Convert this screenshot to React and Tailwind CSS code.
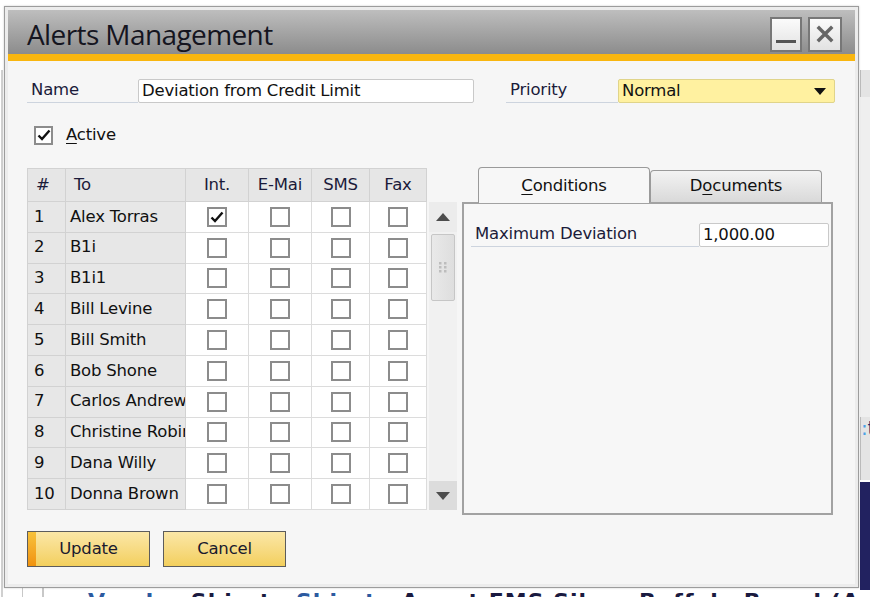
import React from "react";

const rows = [
  { n: 1, name: "Alex Torras", int: true },
  { n: 2, name: "B1i" },
  { n: 3, name: "B1i1" },
  { n: 4, name: "Bill Levine" },
  { n: 5, name: "Bill Smith" },
  { n: 6, name: "Bob Shone" },
  { n: 7, name: "Carlos Andrews" },
  { n: 8, name: "Christine Robinson" },
  { n: 9, name: "Dana Willy" },
  { n: 10, name: "Donna Brown" },
];

const Check = () => (
  <svg width="14" height="12" viewBox="0 0 14 12">
    <path d="M1.5 6.5 L5 10 L12.5 1.5" fill="none" stroke="#111" strokeWidth="2.4" />
  </svg>
);

const Box = ({ checked }) => (
  <div className="w-[20px] h-[20px] border-2 border-[#8c8c8c] bg-white flex items-center justify-center">
    {checked && <Check />}
  </div>
);

const Field = ({ label, labelW, fieldW, value, yellow }) => (
  <div className="flex items-end">
    <div
      className="h-[25px] border-b border-[#cdd4de] pl-[4px] leading-[24px] text-[#1b1b3a] whitespace-nowrap"
      style={{ width: labelW }}
    >
      {label}
    </div>
    <div
      className={`h-[24px] border rounded-[2px] pl-[3px] leading-[22px] flex items-center justify-between pr-[8px] ${
        yellow ? "bg-[#fff1a0] border-[#e0d48a]" : "bg-white border-[#c9c9c9]"
      }`}
      style={{ width: fieldW }}
    >
      <span className="whitespace-nowrap">{value}</span>
      {yellow && (
        <svg width="12" height="7" viewBox="0 0 12 7">
          <path d="M0 0 H12 L6 7 Z" fill="#111" />
        </svg>
      )}
    </div>
  </div>
);

const cols = "grid grid-cols-[39px_120px_63px_63px_58px_57px]";

const App = () => {
  return (
    <div className="relative w-[870px] h-[597px] overflow-hidden bg-white font-['DejaVu_Sans',sans-serif] text-[16.5px] tracking-[-0.2px] text-[#111]">
      {/* desktop behind the dialog */}
      <div className="absolute left-[1px] top-[70px] w-[2px] h-[527px] bg-[#d0d0d0]" />
      <div className="absolute left-[860px] top-[70px] w-[10px] h-[410px] bg-[#e4e4e4] border-l border-[#bdbdbd]" />
      <div className="absolute left-[860px] top-[97px] w-[10px] h-[320px] bg-[#efefef]" />
      <div className="absolute left-[861px] top-[416px] text-[20px] leading-[24px] text-[#1d2a6b] whitespace-nowrap">
        <span className="text-[#4aa0e6]">:</span>t
      </div>
      <div className="absolute left-[860px] top-[482px] w-[10px] h-[108px] bg-[#222260]" />
      <div className="absolute left-[42px] top-[588px] w-[2px] h-[9px] bg-[#c8c8c8]" />
      <div className="absolute left-[22px] top-[588px] w-[1px] h-[9px] bg-[#c8c8c8]" />
      <div className="absolute left-[88px] top-[589px] whitespace-nowrap font-bold text-[22px] leading-[26px] text-[#1a1a40] tracking-[1px]">
        <span className="text-[#2c5aa0]">Vendor</span> Ship-to <span className="text-[#2c5aa0]">Ship-to</span> Agent EMS Silver Buffalo Board (Ame
      </div>

      {/* dialog window */}
      <div className="absolute left-[4px] top-[6px] w-[855px] h-[582px] border border-[#9c9c9c] bg-[#ececec] p-[3px] flex flex-col shadow-[0_0_2px_rgba(0,0,0,0.2)]">
        {/* title bar */}
        <div className="h-[44px] bg-gradient-to-b from-[#bebebe] to-[#8c8c8c] flex items-center justify-between pl-[19px] pr-[13px]">
          <div className="font-['Open_Sans',sans-serif] text-[28px] tracking-[-0.6px] text-[#15151f] pt-[4px]">
            Alerts Management
          </div>
          <div className="flex gap-[6px] pt-[4px]">
            <div className="w-[32px] h-[35px] border-2 border-[#777] bg-gradient-to-b from-[#fbfbfb] to-[#e2e2e2] flex items-end justify-center pb-[7px]">
              <div className="w-[20px] h-[3px] bg-[#555]" />
            </div>
            <div className="w-[34px] h-[35px] border-2 border-[#777] bg-gradient-to-b from-[#fbfbfb] to-[#e2e2e2] flex items-center justify-center">
              <svg width="18" height="18" viewBox="0 0 18 18">
                <path d="M3 3 L15 15 M15 3 L3 15" stroke="#666" strokeWidth="3.5" strokeLinecap="square" />
              </svg>
            </div>
          </div>
        </div>
        <div className="h-[7px] bg-[#f9b60f]" />

        {/* content */}
        <div className="flex-1 bg-[#f6f6f6] flex flex-col pl-[19px]">
          <div className="flex mt-[17px]">
            <Field label="Name" labelW={111} fieldW={336} value="Deviation from Credit Limit" />
            <div className="w-[32px]" />
            <Field label="Priority" labelW={112} fieldW={217} value="Normal" yellow />
          </div>

          <div className="flex items-center mt-[22px] ml-[7px] h-[20px]">
            <div className="w-[19px] h-[19px] border-2 border-[#8c8c8c] bg-white flex items-center justify-center">
              <Check />
            </div>
            <span className="ml-[13px]">
              <span className="underline underline-offset-[3px]">A</span>ctive
            </span>
          </div>

          <div className="flex items-start mt-[23px]">
            {/* matrix */}
            <div className="flex flex-col w-[400px]">
              <div className={`${cols} h-[34px] bg-[#e6e6e6] text-[#1b1b3a]`}>
                {["#", "To", "Int.", "E-Mai", "SMS", "Fax"].map((h, i) => (
                  <div
                    key={h}
                    className={`border-r border-b border-[#d2d2d2] border-t flex items-center ${
                      i < 2 ? "pl-[8px]" : "justify-center"
                    } ${i === 0 ? "border-l" : ""} overflow-hidden whitespace-nowrap`}
                  >
                    {h}
                  </div>
                ))}
              </div>
              {rows.map((r) => (
                <div key={r.n} className={`${cols} h-[30.8px]`}>
                  <div className="bg-[#e7e7e7] border-l border-r border-b border-[#d2d2d2] pl-[6px] flex items-center">
                    {r.n}
                  </div>
                  <div className="bg-[#e7e7e7] border-r border-b border-[#d2d2d2] pl-[4px] flex items-center overflow-hidden whitespace-nowrap">
                    {r.name}
                  </div>
                  {[r.int, false, false, false].map((c, i) => (
                    <div key={i} className="bg-white border-r border-b border-[#dcdcdc] flex items-center justify-center">
                      <Box checked={c} />
                    </div>
                  ))}
                </div>
              ))}
            </div>

            {/* scrollbar */}
            <div className="ml-[2px] mt-[34px] w-[28px] h-[308px] bg-[#f1f1f1] flex flex-col">
              <div className="h-[30px] bg-[#ececec] flex items-center justify-center">
                <svg width="14" height="8" viewBox="0 0 14 8">
                  <path d="M0 8 H14 L7 0 Z" fill="#4d4d4d" />
                </svg>
              </div>
              <div className="mx-[2px] mt-[2px] h-[67px] border border-[#c6c6c6] rounded-[2px] bg-gradient-to-r from-[#e9e9e9] to-[#dedede] flex items-center justify-center">
                <svg width="8" height="12" viewBox="0 0 8 12">
                  {[0, 4, 8].map((y) =>
                    [0, 5].map((x) => <rect key={`${x}-${y}`} x={x} y={y} width="2.5" height="2.5" fill="#bdbdbd" />)
                  )}
                </svg>
              </div>
              <div className="flex-1" />
              <div className="h-[29px] bg-[#dcdcdc] flex items-center justify-center">
                <svg width="14" height="8" viewBox="0 0 14 8">
                  <path d="M0 0 H14 L7 8 Z" fill="#4d4d4d" />
                </svg>
              </div>
            </div>

            {/* tabs */}
            <div className="ml-[5px] flex flex-col w-[371px] -mt-[2px]">
              <div className="flex h-[36px] items-end pl-[16px]">
                <div className="w-[172px] h-[36px] border border-b-0 border-[#9a9a9a] rounded-t-[4px] bg-[#f7f7f7] flex items-center justify-center relative z-10 -mb-[1px] pt-[2px]">
                  <span>
                    <span className="underline underline-offset-[3px]">C</span>onditions
                  </span>
                </div>
                <div className="w-[172px] h-[32px] border border-b-0 border-[#9a9a9a] rounded-t-[4px] bg-gradient-to-b from-[#f3f3f3] to-[#d9d9d9] flex items-center justify-center">
                  <span>
                    D<span className="underline underline-offset-[3px]">o</span>cuments
                  </span>
                </div>
              </div>
              <div className="h-[313px] border-2 border-[#a2a2a2] bg-[#f7f7f7] pt-[18px] pl-[7px]">
                <Field label="Maximum Deviation" labelW={228} fieldW={130} value="1,000.00" />
              </div>
            </div>
          </div>

          <div className="flex gap-[13px] mt-[16px]">
            <div className="w-[123px] h-[36px] border border-[#5c5c5c] bg-gradient-to-b from-[#fbe7a6] to-[#f3cf5c] flex">
              <div className="w-[8px] bg-gradient-to-b from-[#f7c23a] to-[#f0920c]" />
              <div className="flex-1 flex items-center justify-center pr-[8px] text-[#1a1a2e]">Update</div>
            </div>
            <div className="w-[123px] h-[36px] border border-[#5c5c5c] bg-gradient-to-b from-[#fbe7a6] to-[#f3cf5c] flex items-center justify-center text-[#1a1a2e]">
              Cancel
            </div>
          </div>
        </div>
      </div>
    </div>
  );
};

export default App;
